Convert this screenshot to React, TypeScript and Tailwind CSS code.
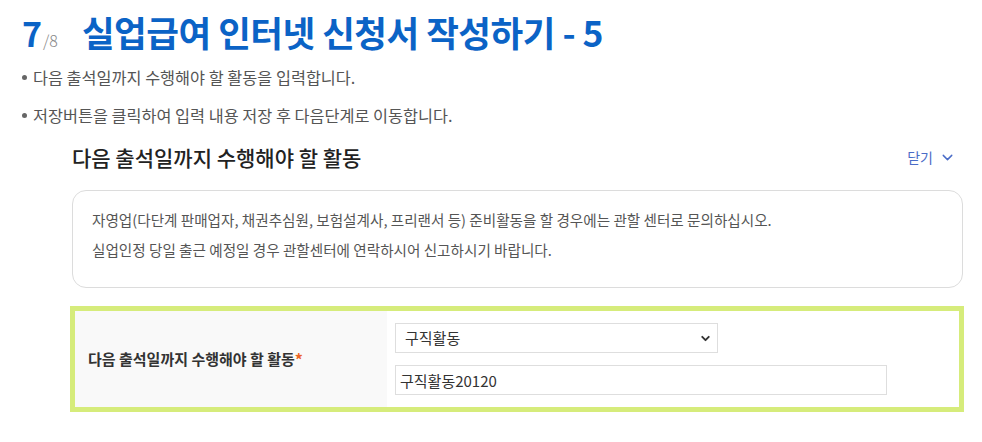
import { ChevronDown } from "lucide-react";

const notices = [
  "다음 출석일까지 수행해야 할 활동을 입력합니다.",
  "저장버튼을 클릭하여 입력 내용 저장 후 다음단계로 이동합니다.",
];

export default function App() {
  return (
    <div className="min-h-screen bg-white font-['Noto_Sans_CJK_KR',sans-serif] text-[#333]">
      <div className="pl-[22px] pt-[10px]">
        <h1 className="flex items-baseline leading-[44px]">
          <span className="text-[34px] font-bold text-[#0b63c6]">7</span>
          <span className="ml-[1px] text-[16px] font-light text-[#888]">/8</span>
          <span className="ml-[24px] text-[35.5px] font-bold tracking-[-0.5px] text-[#0b63c6]">
            실업급여 인터넷 신청서 작성하기 - 5
          </span>
        </h1>
        <ul className="flex flex-col gap-[8px]">
          {notices.map((t) => (
            <li key={t} className="flex items-center text-[16.3px] leading-[30px] text-[#555]">
              <span className="mr-[6px] h-[5px] w-[5px] rounded-full bg-[#666]" />
              {t}
            </li>
          ))}
        </ul>
      </div>

      <div className="ml-[70px] mr-[18px] mt-[11px]">
        <div className="flex items-center justify-between pl-[2px] pr-[8px]">
          <h2 className="text-[21px] font-medium leading-[32px] text-[#222]">
            다음 출석일까지 수행해야 할 활동
          </h2>
          <button type="button" className="flex items-center gap-[6px] text-[14px] text-[#4a6cc7]">
            닫기
            <ChevronDown size={17} strokeWidth={2} />
          </button>
        </div>

        <div className="ml-[2px] mr-[1px] mt-[17px] h-[98px] rounded-[14px] border border-[#dcdcdc] px-[19px] pt-[14px] text-[14.6px] leading-[30px] text-[#555]">
          <p>자영업(다단계 판매업자, 채권추심원, 보험설계사, 프리랜서 등) 준비활동을 할 경우에는 관할 센터로 문의하십시오.</p>
          <p>실업인정 당일 출근 예정일 경우 관할센터에 연락하시어 신고하시기 바랍니다.</p>
        </div>

        <div className="mt-[18px] flex h-[106px] border-[5px] border-[#d6ec7b]">
          <div className="flex w-[312px] items-center bg-[#f9f9f9] pl-[13px] text-[15px] font-bold text-[#333]">
            다음 출석일까지 수행해야 할 활동
            <span className="text-[16px] text-[#ec6526]">*</span>
          </div>
          <div className="flex flex-1 flex-col gap-[12px] pl-[8px] pt-[12px]">
            <div className="relative w-[323px]">
              <select
                defaultValue="구직활동"
                className="h-[30px] w-full appearance-none border border-[#dedede] bg-white pl-[9px] text-[15px] text-[#333] outline-none"
              >
                <option>구직활동</option>
              </select>
              <ChevronDown
                size={13}
                strokeWidth={3.5}
                className="pointer-events-none absolute right-[6px] top-[9px] text-[#333]"
              />
            </div>
            <input
              defaultValue="구직활동20120"
              className="h-[30px] w-[492px] border border-[#dedede] bg-white pl-[4px] text-[15px] text-[#333] outline-none"
            />
          </div>
        </div>
      </div>
    </div>
  );
}
